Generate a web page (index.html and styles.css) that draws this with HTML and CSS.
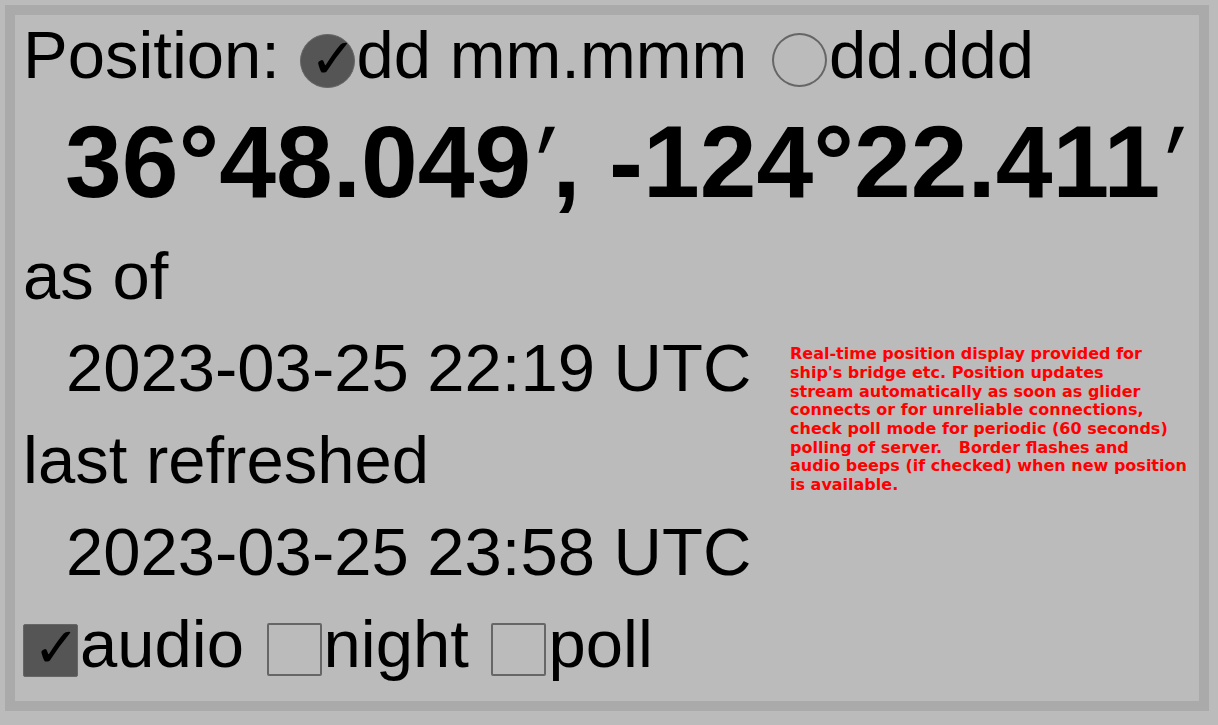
FILE: index.html
```html
<!DOCTYPE html>
<html>
<head>
<meta charset="utf-8">
<link rel="stylesheet" href="styles.css">
<title>Position</title>
</head>
<body>
<div class="panel">
  <div class="row pos">Position: <span class="radio on first"><span class="tick">✓</span></span>dd mm.mmm <span class="radio second"></span>dd.ddd</div>
  <div class="row big">36°48.049<span class="prime">′</span>, -124°22.411<span class="prime">′</span></div>
  <div class="row left">as of</div>
  <div class="row left indent">2023-03-25 22:19 UTC</div>
  <div class="row left">last refreshed</div>
  <div class="row left indent">2023-03-25 23:58 UTC</div>
  <div class="note">Real-time position display provided for<br>ship's bridge etc. Position updates<br>stream automatically as soon as glider<br>connects or for unreliable connections,<br>check poll mode for periodic (60 seconds)<br>polling of server.&nbsp;&nbsp; Border flashes and<br>audio beeps (if checked) when new position<br>is available.</div>
  <div class="row opts"><span class="box on first"><span class="tick">✓</span></span>audio <span class="box"></span>night <span class="box"></span>poll</div>
</div>
</body>
</html>
```
FILE: styles.css
```css
html, body {
  background: #bbbbbb;
}
body {
  margin: 5px;
  font-family: "Liberation Sans", Arial, sans-serif;
  color: #000;
}
.panel {
  width: 1166px;
  border: 10px solid #aaaaaa;
  padding: 0 10px 11px 8px;
  display: grid;
  grid-template-columns: 767px 1fr;
}
.row {
  grid-column: 1 / -1;
  font-size: 67px;
  line-height: 92px;
  white-space: nowrap;
}
.row.left {
  grid-column: 1;
}
.pos {
  line-height: 79px;
}
.big {
  font-size: 102px;
  font-weight: bold;
  line-height: 136px;
  padding-left: 42px;
}
.prime {
  font-weight: normal;
  display: inline-block;
  margin-left: 2px;
  transform: skewX(-8deg);
}
.indent {
  padding-left: 43px;
}
.note {
  grid-column: 2;
  grid-row: 3 / 7;
  align-self: center;
  padding-top: 12px;
  color: #ff0000;
  font-family: "DejaVu Sans", sans-serif;
  font-weight: bold;
  font-size: 16px;
  line-height: 18.7px;
  white-space: nowrap;
}
.radio, .box {
  display: inline-flex;
  align-items: flex-end;
  justify-content: flex-end;
  box-sizing: border-box;
  width: 55px;
  height: 54px;
  margin: 0 2px 0 4px;
  border: 2px solid #666666;
  vertical-align: -9px;
}
.radio {
  border-radius: 50%;
}
.radio.first {
  margin-left: 1px;
}
.radio.second {
  margin-left: 6px;
}
.box {
  height: 53px;
  border-radius: 2px;
}
.box.first {
  margin-left: 0;
}
.tick {
  font-family: "DejaVu Sans", sans-serif;
  font-weight: bold;
  font-size: 56px;
  line-height: 1;
  margin-right: -3px;
}
.on {
  background: #555555;
  border: 1px solid #666666;
  vertical-align: baseline;
}
```
